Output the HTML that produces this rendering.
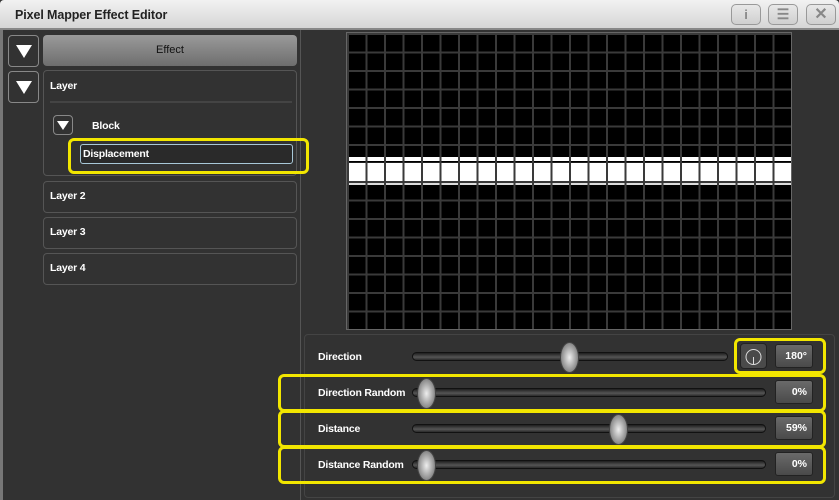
<!DOCTYPE html>
<html><head><style>
*{margin:0;padding:0;box-sizing:border-box}
body{width:839px;height:500px;overflow:hidden;background:#323232;font-family:"Liberation Sans",sans-serif;font-weight:bold;color:#fff;position:relative}
.abs{position:absolute}
.title{left:0;top:0;width:839px;height:30px;background:linear-gradient(#f2f2f2,#d6d6d6);border-bottom:2px solid #888;border-radius:4px 4px 0 0}
.title span{position:absolute;left:15px;top:8px;font-size:12.5px;color:#222;font-weight:bold;letter-spacing:-0.1px}
.tb{top:4px;height:21px;border:1px solid #999;border-radius:5px;background:linear-gradient(#e8e8e8,#cfcfcf);color:#888;text-align:center;font-size:13px;line-height:19px}
.box{border:1px solid #555;border-radius:4px}
.lbl{font-size:10.5px;position:absolute;letter-spacing:-0.2px}
.ybox{border:3px solid #f2e600;border-radius:6px;position:absolute}
.track{position:absolute;height:9px;border-radius:5px;background:linear-gradient(#1e1e1e,#555 60%,#2a2a2a);border:1px solid #111}
.knob{position:absolute;width:19px;height:31px;border-radius:50%;background:radial-gradient(ellipse at center,#eee,#888 70%,#555);border:1px solid #444}
.val{position:absolute;width:38px;height:24px;border-radius:3px;background:linear-gradient(#6a6a6a,#4a4a4a);border:1px solid #222;font-size:10.5px;text-align:right;padding-right:5px;line-height:22px}
.tri{position:absolute;width:0;height:0;border-left:8px solid transparent;border-right:8px solid transparent;border-top:13px solid #fff}
</style></head><body>
<div class="abs title"><span>Pixel Mapper Effect Editor</span></div>
<div class="abs tb" style="left:731px;width:30px">i</div>
<div class="abs tb" style="left:768px;width:30px;font-size:14px">&#9776;</div>
<div class="abs tb" style="left:806px;width:30px;font-size:16px">&#10005;</div>
<div class="abs" style="left:0;top:30px;width:3px;height:470px;background:#777"></div>
<div class="abs" style="left:300px;top:30px;width:1px;height:470px;background:#555"></div>
<div class="abs box" style="left:8px;top:35px;width:31px;height:32px;border-color:#888;border-radius:4px"><div class="tri" style="left:7px;top:9px"></div></div>
<div class="abs box" style="left:8px;top:71px;width:31px;height:32px;border-color:#888"><div class="tri" style="left:7px;top:9px"></div></div>
<div class="abs" style="left:43px;top:35px;width:254px;height:31px;border-radius:4px;background:linear-gradient(#9a9a9a,#6e6e6e);color:#111;font-size:11px;font-weight:normal;text-align:center;line-height:31px">Effect</div>
<div class="abs box" style="left:43px;top:70px;width:254px;height:106px"></div>
<div class="lbl" style="left:50px;top:80px">Layer</div>
<div class="abs" style="left:50px;top:101px;width:242px;height:2px;background:#444"></div>
<div class="abs box" style="left:53px;top:115px;width:20px;height:20px;border-color:#888"><div class="tri" style="left:3px;top:5px;border-left-width:6px;border-right-width:6px;border-top-width:9px"></div></div>
<div class="lbl" style="left:92px;top:120px">Block</div>
<div class="ybox" style="left:68px;top:138px;width:241px;height:36px"></div>
<div class="abs" style="left:80px;top:144px;width:213px;height:20px;border:1px solid #a8c8d8;border-radius:3px;background:#2a2a2a"></div>
<div class="lbl" style="left:83px;top:148px">Displacement</div>
<div class="abs box" style="left:43px;top:181px;width:254px;height:32px"></div><div class="lbl" style="left:50px;top:190px">Layer 2</div>
<div class="abs box" style="left:43px;top:217px;width:254px;height:32px"></div><div class="lbl" style="left:50px;top:226px">Layer 3</div>
<div class="abs box" style="left:43px;top:253px;width:254px;height:32px"></div><div class="lbl" style="left:50px;top:262px">Layer 4</div>
<div class="abs" style="left:346px;top:32px;width:446px;height:298px;background:#000;border:1px solid #666">
<div style="position:absolute;left:0;top:0;width:444px;height:296px;background-image:linear-gradient(90deg,#3a3a3a 2px,transparent 2px),linear-gradient(#3a3a3a 2px,transparent 2px);background-size:18.5px 18.5px"></div>
<div style="position:absolute;left:0;top:124px;width:444px;height:4px;background-image:linear-gradient(90deg,#3a3a3a 2px,#fff 2px);background-size:18.5px 4px"></div>
<div style="position:absolute;left:0;top:130px;width:444px;height:18px;background-image:linear-gradient(90deg,#3a3a3a 2px,#fff 2px);background-size:18.5px 18px"></div>
<div style="position:absolute;left:0;top:150px;width:444px;height:2px;background-image:linear-gradient(90deg,#3a3a3a 2px,#ddd 2px);background-size:18.5px 2px"></div>
</div>
<div class="abs box" style="left:304px;top:334px;width:531px;height:164px;border-color:#444"></div>
<div class="lbl" style="left:318px;top:351px">Direction</div>
<div class="track" style="left:412px;top:352px;width:316px"></div>
<div class="knob" style="left:560px;top:342px"></div>
<div class="ybox" style="left:734px;top:338px;width:92px;height:36px"></div>
<div class="abs" style="left:740px;top:343px;width:27px;height:26px;border-radius:4px;background:#4a4a4a;border:1px solid #222"><svg width="25" height="24" style="position:absolute;left:0;top:0"><circle cx="12.5" cy="13" r="7.5" fill="none" stroke="#ddd" stroke-width="1"/><line x1="12.5" y1="13" x2="12.5" y2="20" stroke="#ddd"/></svg></div>
<div class="val" style="left:775px;top:344px">180°</div>
<div class="ybox" style="left:278px;top:374px;width:548px;height:38px"></div>
<div class="lbl" style="left:318px;top:387px">Direction Random</div>
<div class="track" style="left:412px;top:388px;width:354px"></div>
<div class="knob" style="left:417px;top:378px"></div>
<div class="val" style="left:775px;top:380px">0%</div>
<div class="ybox" style="left:278px;top:410px;width:548px;height:38px"></div>
<div class="lbl" style="left:318px;top:423px">Distance</div>
<div class="track" style="left:412px;top:424px;width:354px"></div>
<div class="knob" style="left:609px;top:414px"></div>
<div class="val" style="left:775px;top:416px">59%</div>
<div class="ybox" style="left:278px;top:446px;width:548px;height:38px"></div>
<div class="lbl" style="left:318px;top:459px">Distance Random</div>
<div class="track" style="left:412px;top:460px;width:354px"></div>
<div class="knob" style="left:417px;top:450px"></div>
<div class="val" style="left:775px;top:452px">0%</div>
</body></html>
